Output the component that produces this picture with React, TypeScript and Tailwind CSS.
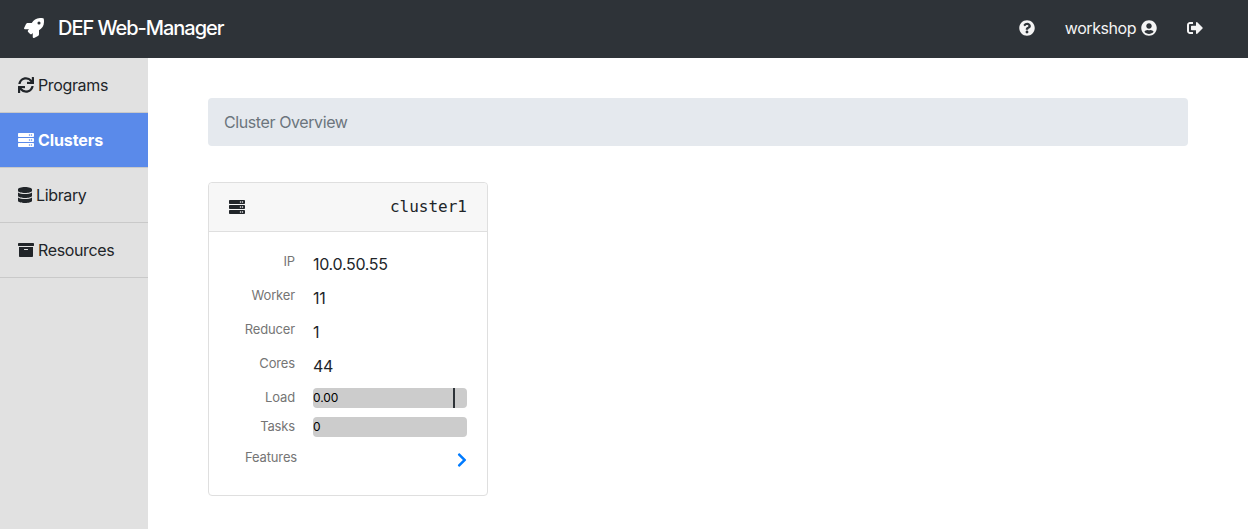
import React from "react";
import {
  FaArchive, FaChevronRight, FaDatabase, FaQuestionCircle, FaRocket, FaServer, FaSignOutAlt, FaSync, FaUserCircle,
} from "react-icons/fa";

function Header() {
  return (
    <header className="flex h-[58px] items-center bg-[#2e3338] pl-6 pr-[45px] text-white">
      <FaRocket className="mt-[-2px] size-5" />
      <span className="ml-[14px] mt-[-2px] text-[20px] font-medium leading-[30px] tracking-[-1.03px]">DEF Web-Manager</span>
      <div className="ml-auto mt-[-2px] flex items-center text-[#f4f4f4]">
        <FaQuestionCircle className="size-4" />
        <span className="ml-[30px] text-[16px] leading-6 tracking-[-0.45px]">workshop</span>
        <FaUserCircle className="ml-[5px] size-4" />
        <FaSignOutAlt className="ml-[30px] size-4" />
      </div>
    </header>
  );
}

type NavProps = { icon: React.ReactNode; label: string; active?: boolean };

function NavItem({ icon, label, active }: NavProps) {
  return (
    <a
      className={
        active
          ? "flex h-[55px] items-center gap-1 border-b border-[#c9c9c9] bg-[#5a8aea] pl-[18px] font-bold tracking-[-0.1px] text-white"
          : "flex h-[55px] items-center gap-1 border-b border-[#c9c9c9] pl-[18px] tracking-[-0.36px]"
      }
    >
      {icon}
      <span>{label}</span>
    </a>
  );
}

function Row({ label, value }: { label: string; value: string }) {
  return (
    <div className="flex h-[34px]">
      <span className="mt-[-1px] w-[86px] text-right text-[13px] leading-5 tracking-[-0.15px] text-[#757575]">{label}</span>
      <span className="ml-[18px] text-[16px] leading-6 tracking-[-0.3px]">{value}</span>
    </div>
  );
}

function Meter({ label, value, marker }: { label: string; value: string; marker?: boolean }) {
  return (
    <div className="flex h-5">
      <span className="mt-[-1px] w-[86px] text-right text-[13px] leading-5 tracking-[-0.15px] text-[#757575]">{label}</span>
      <div className="ml-[18px] flex h-5 w-[154px] rounded bg-[#ccc]">
        <span className="w-[140px] text-[12px] leading-5 tracking-[-0.1px] text-black">{value}</span>
        {marker && <span className="h-5 w-[2px] bg-[#2e3338]" />}
      </div>
    </div>
  );
}

function ClusterCard() {
  return (
    <section className="mt-9 h-[314px] w-[280px] rounded border border-[#dfdfdf] bg-white">
      <div className="flex h-[49px] items-center justify-between rounded-t border-b border-[#dfdfdf] bg-[#f7f7f7] px-5">
        <FaServer className="size-4" />
        <span className="font-['DejaVu_Sans_Mono',monospace] text-[16px]">cluster1</span>
      </div>
      <div className="pt-5">
        <Row label="IP" value="10.0.50.55" />
        <Row label="Worker" value="11" />
        <Row label="Reducer" value="1" />
        <Row label="Cores" value="44" />
        <Meter label="Load" value="0.00" marker />
        <div className="h-[9px]" />
        <Meter label="Tasks" value="0" />
        <div className="mt-[10px] flex items-start justify-between pl-9 pr-5">
          <span className="text-[13px] leading-5 tracking-[-0.15px] text-[#757575]">Features</span>
          <FaChevronRight className="mt-[5px] h-4 w-[10px] text-[#007bff]" />
        </div>
      </div>
    </section>
  );
}

export default function App() {
  return (
    <div className="flex h-[529px] flex-col overflow-hidden bg-white font-['Inter',sans-serif] text-[16px] leading-6 text-[#212529]">
      <Header />
      <div className="flex flex-1">
        <nav className="w-[148px] bg-[#e1e1e1]">
          <NavItem icon={<FaSync className="size-4" />} label="Programs" />
          <NavItem icon={<FaServer className="size-4" />} label="Clusters" active />
          <NavItem icon={<FaDatabase className="h-4 w-[14px]" />} label="Library" />
          <NavItem icon={<FaArchive className="size-4" />} label="Resources" />
        </nav>
        <main className="flex-1 px-[60px] pt-10">
          <div className="h-12 rounded bg-[#e5e9ee] px-4 py-3 tracking-[-0.4px] text-[#6c757d]">Cluster Overview</div>
          <ClusterCard />
        </main>
      </div>
    </div>
  );
}
